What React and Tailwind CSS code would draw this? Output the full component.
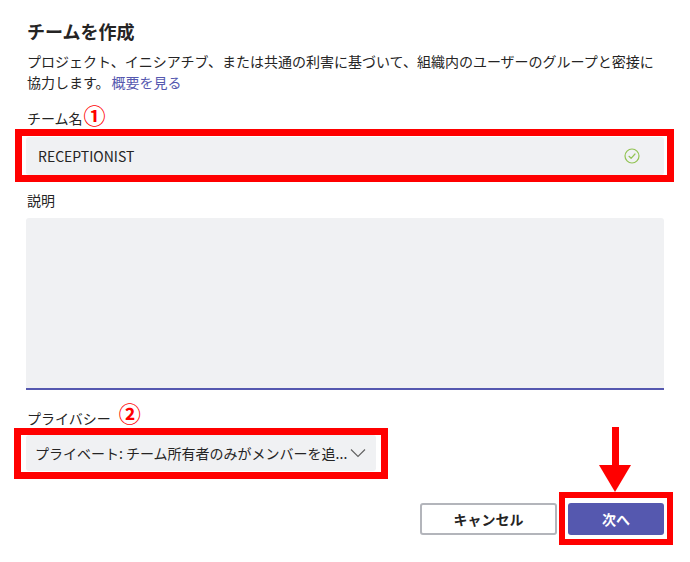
import React from "react";

const font = { fontFamily: '"Noto Sans CJK JP", "Noto Sans", sans-serif' };

function RedBox({ className }) {
  return <div className={"pointer-events-none absolute border-[#ff0000] " + className} />;
}

export default function App() {
  return (
    <div
      className="relative w-[690px] h-[562px] bg-white px-[26px] pt-[19px] text-[#252424] overflow-hidden"
      style={font}
    >
      <h1 className="text-[18px] leading-[24px] font-bold pl-[1px]">チームを作成</h1>
      <p className="mt-[8px] text-[14px] leading-[21px] pl-[1px] w-[650px]">
        <span className="whitespace-nowrap">プロジェクト、イニシアチブ、または共通の利害に基づいて、組織内のユーザーのグループと密接に</span>
        <br />
        協力します。<span className="text-[#5558af] pl-[2px]">概要を見る</span>
      </p>

      <div className="mt-[11px] flex items-end h-[24px] pl-[1px]">
        <span className="text-[14px] leading-[20px]">チーム名</span>
        <span className="text-[22px] leading-[24px] font-bold text-[#ff0000] ml-[1px] relative top-[-2px]">①</span>
      </div>

      <div className="relative mt-[9px]">
        <div className="h-[38px] bg-[#f0f1f3] rounded-[3px] flex items-center pl-[12px] pr-[24px] justify-between">
          <span className="text-[14px]">RECEPTIONIST</span>
          <svg width="16" height="16" viewBox="0 0 16 16" fill="none">
            <circle cx="8" cy="8" r="7" stroke="#92c353" strokeWidth="1.2" />
            <path d="M5 8.3 L7.1 10.3 L11 6" stroke="#92c353" strokeWidth="1.2" strokeLinecap="round" strokeLinejoin="round" />
          </svg>
        </div>
        <RedBox className="-left-[11px] -right-[10px] -top-[8px] -bottom-[7px] border-[7px]" />
      </div>

      <div className="mt-[15px] text-[14px] leading-[20px] pl-[1px]">説明</div>
      <div className="mt-[8px] h-[172px] bg-[#f0f1f3] border-b-2 border-[#5558af] rounded-t-[3px]" />

      <div className="mt-[14px] flex items-end h-[24px] pl-[1px]">
        <span className="text-[14px] leading-[20px]">プライバシー</span>
        <span className="text-[22px] leading-[24px] font-bold text-[#ff0000] ml-[8px] relative top-[-4px]">②</span>
      </div>

      <div className="relative mt-[7px] w-[350px]">
        <div className="h-[36px] bg-[#f0f1f3] rounded-[3px] flex items-center pl-[9px] pr-[10px] justify-between">
          <span className="text-[14px] whitespace-nowrap">プライベート: チーム所有者のみがメンバーを追...</span>
          <svg width="16" height="10" viewBox="0 0 16 10" fill="none">
            <path d="M1 1.5 L8 8.5 L15 1.5" stroke="#616161" strokeWidth="1.1" />
          </svg>
        </div>
        <RedBox className="-left-[12px] -right-[12px] -top-[7px] -bottom-[8px] border-[7px]" />
      </div>

      <div className="mt-[32px] flex justify-end gap-[11px]">
        <button className="w-[137px] h-[32px] rounded-[3px] border-2 border-[#b3b5bb] bg-white text-[14px] font-semibold text-[#252424]" style={font}>
          キャンセル
        </button>
        <div className="relative">
          <button className="w-[96px] h-[32px] rounded-[3px] bg-[#5558af] text-[14px] font-bold text-white" style={font}>
            次へ
          </button>
          <RedBox className="-left-[9px] -right-[9px] -top-[11px] -bottom-[10px] border-[6px]" />
        </div>
      </div>

      <svg className="absolute left-[599px] top-[427px]" width="32" height="66" viewBox="0 0 32 66">
        <rect x="13" y="0" width="7" height="40" fill="#ff0000" />
        <polygon points="0,38 32,38 16,65" fill="#ff0000" />
      </svg>
    </div>
  );
}
